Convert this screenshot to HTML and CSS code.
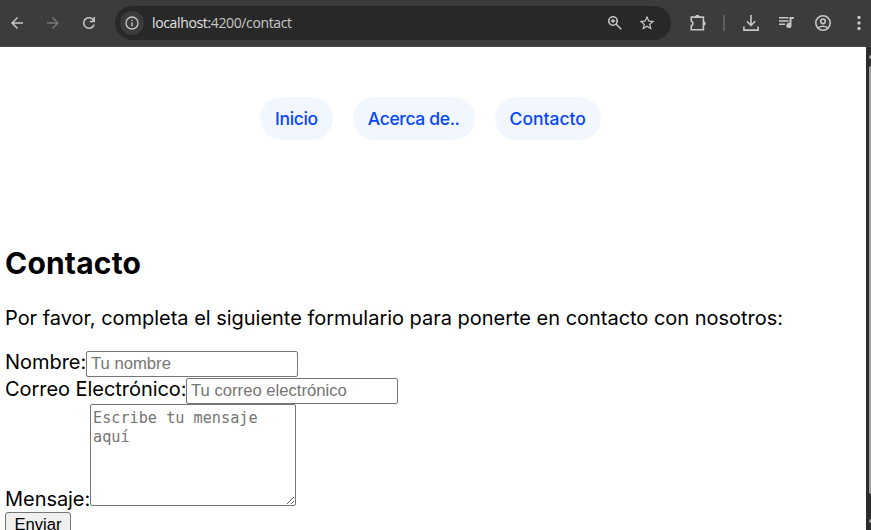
FILE: index.html
```html
<!DOCTYPE html>
<html lang="es">
<head>
<meta charset="utf-8">
<title>Contacto</title>
<link rel="stylesheet" href="styles.css">
</head>
<body>
<header class="toolbar">
  <div class="history">
    <svg class="icon" viewBox="0 0 24 24"><path d="M20 11H7.83l5.59-5.59L12 4l-8 8 8 8 1.41-1.41L7.83 13H20z"/></svg>
    <svg class="icon disabled" viewBox="0 0 24 24"><path d="M4 13h12.17l-5.59 5.59L12 20l8-8-8-8-1.41 1.41L16.17 11H4z"/></svg>
    <svg class="icon" viewBox="0 0 24 24"><path d="M12 20a8 8 0 1 1 5.7-13.6L18 6.7V4h2v7h-7V9h4.2A6 6 0 1 0 17.65 14h2.1A8 8 0 0 1 12 20z"/></svg>
  </div>
  <div class="omnibox">
    <span class="site-info"><svg class="icon info" viewBox="0 0 24 24"><path d="M11 17h2v-6h-2zm0-8h2V7h-2zm1 13a10 10 0 1 1 0-20 10 10 0 0 1 0 20zm0-2a8 8 0 1 0 0-16 8 8 0 0 0 0 16z"/></svg></span>
    <span class="url">localhost:<span class="path">4200/contact</span></span>
    <svg class="icon zoom" viewBox="0 0 16 16"><circle cx="6" cy="6" r="4.2" class="line"/><path class="line" d="M9.2 9.2l5 5"/><path d="M5.3 3.9h1.4v1.4h1.4v1.4H6.7v1.4H5.3V6.7H3.9V5.3h1.4z"/></svg>
    <svg class="icon star" viewBox="0 0 24 24"><path d="M22 9.24l-7.19-.62L12 2 9.19 8.63 2 9.24l5.46 4.73L5.82 21 12 17.27 18.18 21l-1.63-7.03zM12 15.4l-3.76 2.27 1-4.28-3.32-2.88 4.38-.38L12 6.1l1.71 4.04 4.38.38-3.32 2.88 1 4.28z"/></svg>
  </div>
  <div class="actions">
    <svg class="icon puzzle" viewBox="0 0 18 18"><path class="line" d="M2.3 3.1h12.1v12.6H2.3v-4.1a2.3 2.3 0 0 0 0-4.4z"/><path d="M6.2 3a2.2 2.2 0 0 1 4.4 0zM14.5 7.200a2.2 2.2 0 0 1 0 4.400z"/></svg>
    <span class="divider"></span>
    <svg class="icon download" viewBox="0 0 18 18"><path class="line" d="M9 1v10M4.800 7.200L9 11.300l4.200-4.100M1.900 12.500v3.600h14.200v-3.600"/></svg>
    <svg class="icon media" viewBox="0 0 18 18"><path class="line thin" d="M1 3.800h9.500M1 7h9.500M1 10.200h6"/><path d="M11.500 2.900H16v1.900h-2.500v6.600a2.600 2.600 0 1 1-2-2.500z"/></svg>
    <svg class="icon profile" viewBox="0 0 18 18"><circle class="line" cx="9" cy="9" r="7.200"/><circle class="line" cx="9" cy="7.300" r="2.300"/><path class="line" d="M4 13.800q5-3.200 10 0"/></svg>
    <svg class="icon more" viewBox="0 0 18 18"><circle cx="9" cy="3.500" r="1.700"/><circle cx="9" cy="9" r="1.700"/><circle cx="9" cy="14.500" r="1.700"/></svg>
  </div>
</header>
<div class="viewport">
  <main class="page">
    <nav class="pills"><a class="tight">Inicio</a><a class="tight">Acerca de..</a><a>Contacto</a></nav>
    <h2>Contacto</h2>
    <p>Por favor, completa el siguiente formulario para ponerte en contacto con nosotros:</p>
    <form class="form">
      <div class="row name"><label for="n">Nombre:</label><input id="n" type="text" placeholder="Tu nombre"></div>
      <div class="row mail"><label for="c">Correo Electrónico:</label><input id="c" type="text" placeholder="Tu correo electrónico"></div>
      <div class="row message"><label for="m">Mensaje:</label><textarea id="m" placeholder="Escribe tu mensaje aquí"></textarea></div>
      <button type="button">Enviar</button>
    </form>
  </main>
  <div class="scrollbar"><span class="arrow up"></span><span class="thumb"></span><span class="arrow down"></span></div>
</div>
</body>
</html>
```

FILE: styles.css
```css
* { box-sizing: border-box; }
body { margin: 0; width: 871px; height: 530px; overflow: hidden; background: #fff; color: #000; font-family: Inter, sans-serif; }
.toolbar { display: flex; align-items: center; height: 47px; background: #3c3c3c; border-bottom: 1px solid #484848; }
.icon { display: block; flex: none; width: 18px; height: 18px; fill: #c7c7c7; }
.icon .line { fill: none; stroke: #c7c7c7; stroke-width: 1.6; }
.icon.disabled { fill: #757575; }
.history { display: flex; gap: 18px; width: 115px; padding-left: 8px; }
.omnibox { display: flex; align-items: center; width: 556px; height: 34px; padding: 0 15px 0 5px; border-radius: 17px; background: #282828; }
.site-info { display: flex; align-items: center; justify-content: center; width: 24px; height: 24px; border-radius: 50%; background: #3c3c3c; }
.icon.info { width: 16px; height: 16px; }
.url { flex: 1; margin-left: 8px; font: 14px/20px "Open Sans", sans-serif; letter-spacing: -0.36px; color: #e3e3e3; }
.path { color: #c7c7c7; }
.icon.zoom { width: 16px; height: 16px; margin-right: 15px; }
.icon.star { width: 18px; height: 18px; }
.actions { display: flex; align-items: center; margin-left: 18px; }
.divider { width: 2px; height: 16px; margin: 0 17px 0 16px; background: #5e5e5e; }
.icon.download { margin-right: 18px; }
.icon.media { margin-right: 18px; }
.icon.profile { margin-right: 18px; }
.viewport { display: flex; height: 483px; }
.page { width: 866px; padding: 50px 5px 0; }
.pills { display: flex; justify-content: center; gap: 20px; margin-left: -5px; height: 43px; }
.pills a { padding: 0 15px; border-radius: 22px; background: #f2f6ff; color: #0546ff; font-size: 17.5px; font-weight: 500; line-height: 43px; }
.pills .tight { letter-spacing: -0.35px; }
h2 { margin: 105px 0 0; font-size: 30px; line-height: 36px; font-weight: 700; letter-spacing: 0.2px; }
p { margin: 25px 0 0; font-size: 20px; line-height: 24px; letter-spacing: -0.02px; white-space: nowrap; }
.form { margin-top: 20px; font-size: 20px; line-height: 24px; }
.row { display: flex; align-items: flex-start; }
.name, .mail { height: 27px; }
.row label { flex: none; white-space: nowrap; }
.name label { width: 81px; letter-spacing: -0.05px; }
.mail label { width: 181px; letter-spacing: -0.05px; }
.message label { width: 85px; align-self: flex-end; margin-bottom: -5px; letter-spacing: -0.05px; }
.name input { margin-top: 1px; }
.mail input { margin-top: 1px; }
input { width: 212px; height: 26px; padding: 1px 4px; border: 1px solid #767676; border-radius: 2px; font: 16.667px "Liberation Sans", sans-serif; }
textarea { display: block; width: 206px; height: 102px; margin: 0; padding: 4px 2px; border: 1px solid #767676; border-radius: 2px; font: 15.2px/19px "DejaVu Sans Mono", monospace; resize: both; }
input::placeholder, textarea::placeholder { color: #757575; }
button { display: block; width: 66px; height: 26px; margin-top: 6px; padding: 0; border: 1px solid #767676; border-radius: 3px; background: #efefef; color: #000; font: 16.667px "Liberation Sans", sans-serif; }
.scrollbar { display: flex; flex-direction: column; align-items: flex-end; width: 5px; overflow: hidden; background: #2c2c2c; }
.thumb { width: 2px; height: 428px; margin-top: 7px; border-radius: 2px 0 0 2px; background: #9f9f9f; }
.arrow { width: 2px; height: 4px; background: #9f9f9f; border-radius: 2px 0 0 2px; }
.up { margin-top: 8px; }
.down { margin-top: 25px; }
```
